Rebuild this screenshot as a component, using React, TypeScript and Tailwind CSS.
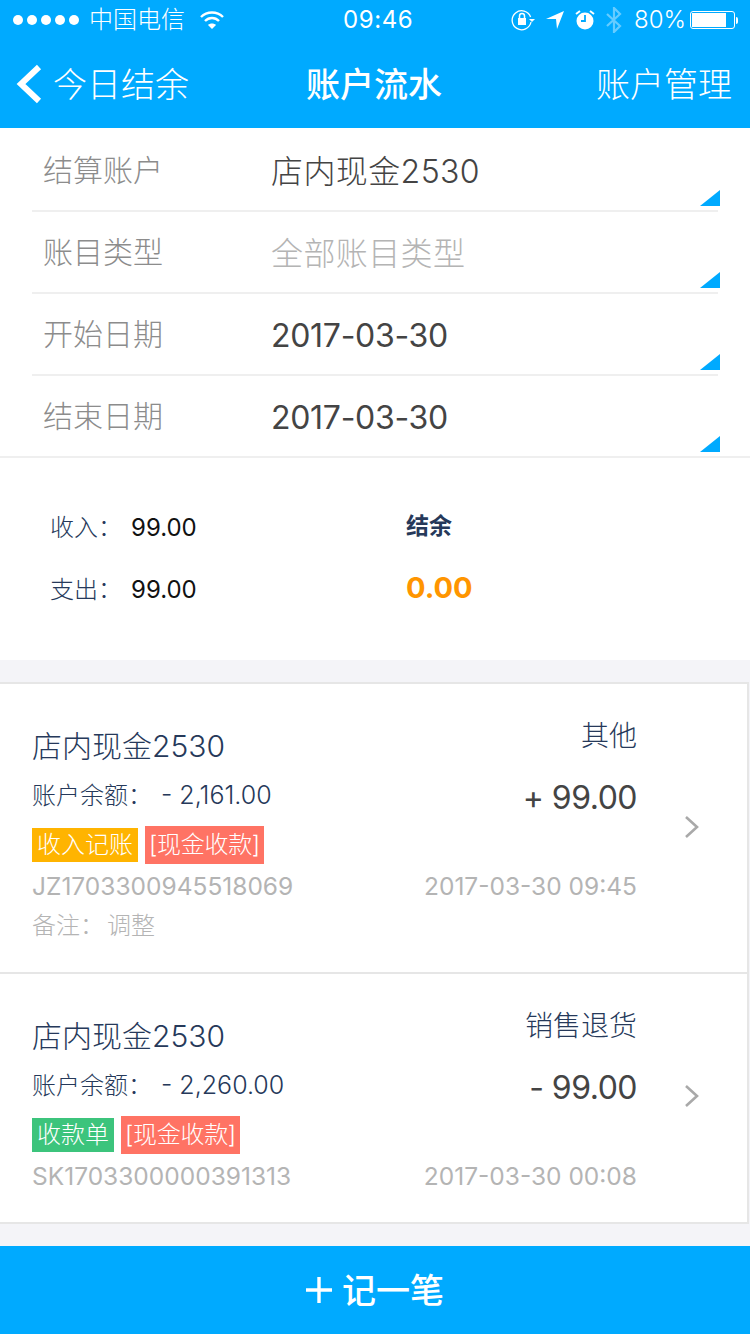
const FONT = "font-['Inter','Noto_Sans_CJK_SC',sans-serif]";
const COLON = "\uFF1A";

function Row({ label, value, muted, last, digits }: { label: string; value: string; muted?: boolean; last?: boolean; digits?: boolean }) {
  return (
    <div className={last ? "border-b-2 border-[#efefef] px-8" : "px-8"}>
      <div className={`relative ${last ? "h-[80px]" : "h-[82px] border-b-2 border-[#efefef]"}`}>
        <div className="flex h-full items-center">
          <span className="w-[239px] pl-[11px] text-[30px] font-light text-[#8c8c8c]">{label}</span>
          <span className={`pt-[4px] text-[32px] ${digits ? "font-normal tracking-[-0.3px]" : "font-light tracking-[0.4px]"} ${muted ? "text-[#b4b4b4]" : "text-[#444444]"}`}>{value}</span>
        </div>
        <svg className="absolute -right-[2px] bottom-[4px]" width="20" height="16" viewBox="0 0 20 16">
          <polygon points="20,0 20,16 0,16" fill="#00aaff" />
        </svg>
      </div>
    </div>
  );
}

function Tag({ text, color, big }: { text: string; color: string; big?: boolean }) {
  return (
    <span
      className={`text-[24px] font-light text-white ${big ? "h-[38px] px-[4px] leading-[38px] tracking-[-0.3px]" : "h-[34px] px-[5px] leading-[34px]"}`}
      style={{ backgroundColor: color }}
    >
      {text}
    </span>
  );
}

function Card({
  bal, cat, amt, tag, tagColor, no, time, note, h, chevronPad,
}: { bal: string; cat: string; amt: string; tag: string; tagColor: string; no: string; time: string; note?: string; h: string; chevronPad: string }) {
  return (
    <div className={`flex ${h} bg-white`}>
      <div className="flex-1 pl-8 pr-[110px]">
        <div className="flex h-[52px] items-end justify-between">
          <span className="text-[30px] font-light leading-[44px] text-[#26395a]">店内现金2530</span>
          <span className="mb-[10px] text-[28px] font-light leading-[44px] text-[#26395a]">{cat}</span>
        </div>
        <div className="flex h-[56px] items-center justify-between">
          <span className="flex items-baseline text-[24px] font-light text-[#26395a]">
            {"账户余额" + COLON}<span className="ml-[9px] text-[25px] font-light">- {bal}</span>
          </span>
          <span className="mt-[3px] text-[32px] font-normal tracking-[-0.5px] text-[#444444]">{amt}</span>
        </div>
        <div className="mt-[2px] flex items-center gap-[7px]">
          <Tag text={tag} color={tagColor} />
          <Tag text="[现金收款]" color="#ff7364" big />
        </div>
        <div className="flex h-[44px] items-center justify-between text-[24.5px] font-normal text-[#b4b4b4]">
          <span>{no}</span>
          <span>{time}</span>
        </div>
        {note && (
          <div className="text-[24px] font-light leading-[36px] text-[#b4b4b4]">
            {"备注" + COLON}<span className="ml-[3px]">调整</span>
          </div>
        )}
      </div>
      <div className={`absolute right-[47px] ${chevronPad}`}>
        <svg width="16" height="24" viewBox="0 0 16 24" fill="none" stroke="#a9a9a9" strokeWidth="2.6">
          <path d="M2 2l11 10L2 22" />
        </svg>
      </div>
    </div>
  );
}

export default function App() {
  return (
    <div className={`relative h-[1334px] w-[750px] overflow-hidden bg-[#f4f4f8] ${FONT}`}>
      <header className="h-[128px] bg-[#00aaff] text-white">
        <div className="flex h-[40px] items-center pl-[13px] pr-[12px] text-[26px] font-light">
          <div className="flex w-[330px] items-center gap-[10px]">
            <div className="flex gap-[4px]">
              {[0, 1, 2, 3, 4].map((i) => <span key={i} className="h-[10px] w-[10px] rounded-full bg-white" />)}
            </div>
            <span className="text-[24px]">中国电信</span>
            <svg className="ml-[4px]" width="26" height="20" viewBox="0 0 26 20" fill="none" stroke="#fff" strokeWidth="2.4">
              <path d="M2 7c6-6 16-6 22 0" />
              <path d="M6 11c4-4 10-4 14 0" />
              <path d="M13 19l-4-4c2-2 6-2 8 0z" fill="#fff" stroke="none" />
            </svg>
          </div>
          <span className="text-[24px] font-normal tracking-[0.6px]">09:46</span>
          <div className="ml-auto flex items-center gap-[11px]">
            <svg width="24" height="22" viewBox="0 0 24 22" fill="none" stroke="#fff" strokeWidth="1.3">
              <path d="M20 13a9.5 9.5 0 1 1-.4-5" />
              <path d="M18 10l3 3 3-3" fill="#fff" stroke="none" />
              <rect x="7" y="9" width="8" height="7" fill="#fff" stroke="none" />
              <path d="M8.5 9V7a2.5 2.5 0 0 1 5 0v2" strokeWidth="1.5" />
            </svg>
            <svg width="18" height="18" viewBox="0 0 18 18"><path d="M0 8L18 0 11 18 10 8z" fill="#fff" /></svg>
            <svg width="20" height="22" viewBox="0 0 20 22">
              <circle cx="10" cy="12" r="8.5" fill="#fff" />
              <path d="M10 6v6H6" stroke="#00aaff" strokeWidth="1.8" fill="none" />
              <path d="M1 5l4-3M19 5l-4-3" stroke="#fff" strokeWidth="2" />
            </svg>
            <svg width="16" height="26" viewBox="0 0 16 26" fill="none" stroke="#66ccff" strokeWidth="2.2">
              <path d="M1 7l13 12-6 6V1l6 6L1 19" />
            </svg>
            <span className="ml-[1px] text-[24px]">80%</span>
            <div className="-ml-[7px] flex items-center">
              <div className="h-[18px] w-[45px] rounded-[3px] border border-white p-[1px]">
                <div className="h-full w-[34px] bg-white" />
              </div>
              <div className="ml-[1px] h-[7px] w-[2px] rounded-r bg-white" />
            </div>
          </div>
        </div>
        <div className="relative flex h-[88px] items-center justify-between pl-[16px] pr-[18px] text-[34px] font-light">
          <div className="flex items-center gap-[11px]">
            <svg width="26" height="40" viewBox="0 0 26 40" fill="none" stroke="#fff" strokeWidth="6">
              <path d="M23 3L5 20l18 17" />
            </svg>
            <span>今日结余</span>
          </div>
          <span className="absolute left-[306px] font-medium">账户流水</span>
          <span>账户管理</span>
        </div>
      </header>

      <section className="bg-white pt-[2px]">
        <Row label="结算账户" value="店内现金2530" />
        <Row label="账目类型" value="全部账目类型" muted />
        <Row label="开始日期" value="2017-03-30" digits />
        <Row label="结束日期" value="2017-03-30" last digits />
      </section>

      <section className="flex h-[202px] bg-white">
        <div className="w-[406px] pl-[50px] pt-[50px] text-[24px] font-light">
          <div className="flex h-[40px] items-center">
            <span className="w-[81px] text-[#26395a]">{"收入" + COLON}</span>
            <span className="font-normal text-[#111]">99.00</span>
          </div>
          <div className="mt-[22px] flex h-[40px] items-center">
            <span className="w-[81px] text-[#26395a]">{"支出" + COLON}</span>
            <span className="font-normal text-[#111]">99.00</span>
          </div>
        </div>
        <div className="pt-[48px]">
          <div className="flex h-[40px] items-center text-[23px] font-bold text-[#26395a]">结余</div>
          <div className="mt-[22px] flex h-[40px] items-center text-[29px] font-bold text-[#ff9500]">0.00</div>
        </div>
      </section>

      <div className="mt-[22px] mr-[1px] border-y-2 border-r-2 border-[#e6e6e6]">
        <div className="relative">
          <Card bal="2,161.00" cat="其他" amt="+ 99.00" tag="收入记账" tagColor="#ffb400" no="JZ1703300945518069" time="2017-03-30 09:45" note="x" h="h-[288px] pt-[32px]" chevronPad="top-[131px]" />
        </div>
        <div className="relative border-t-2 border-[#e6e6e6]">
          <Card bal="2,260.00" cat="销售退货" amt="- 99.00" tag="收款单" tagColor="#3cc47c" no="SK1703300000391313" time="2017-03-30 00:08" h="h-[248px] pt-[32px]" chevronPad="top-[110px]" />
        </div>
      </div>

      <button className="absolute bottom-0 left-0 flex h-[88px] w-full items-center justify-center gap-[10px] bg-[#00aaff] text-[34px] font-medium text-white">
        <svg width="26" height="26" viewBox="0 0 26 26"><path d="M13 0v26M0 13h26" stroke="#fff" strokeWidth="3.4" /></svg>
        记一笔
      </button>
    </div>
  );
}
